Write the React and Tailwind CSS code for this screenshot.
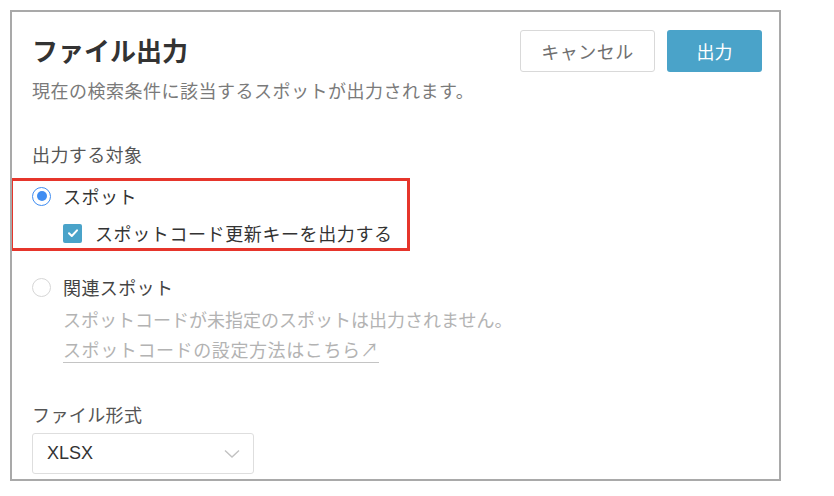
import React from 'react';

const jp = { fontFamily: '"Noto Sans CJK JP", "Noto Sans", sans-serif' };

const Radio = ({ checked }) => (
  <span
    className={
      'flex h-[19px] w-[19px] shrink-0 items-center justify-center rounded-full border ' +
      (checked ? 'border-[#3f8df2] border-[1.5px]' : 'border-[#d6d6d6]')
    }
  >
    {checked && <span className="h-[10px] w-[10px] rounded-full bg-[#3f8df2]" />}
  </span>
);

const Checkbox = () => (
  <span className="flex h-[19px] w-[19px] shrink-0 items-center justify-center rounded-[2px] bg-[#4aa3c9]">
    <svg width="12" height="12" viewBox="0 0 12 12" fill="none">
      <path d="M2 6.2 L4.8 9 L10 3.3" stroke="white" strokeWidth="2" strokeLinecap="round" strokeLinejoin="round" />
    </svg>
  </span>
);

const App = () => {
  return (
    <div className="min-h-[496px] w-[834px] bg-white pl-[10px] pt-[10px]" style={jp}>
      <div className="h-[471px] w-[771px] overflow-hidden border-2 border-[#a9a9a9] bg-white pl-[20px] pr-[17px] pt-[18px]">
        {/* Header */}
        <div className="flex items-start justify-between">
          <div className="mt-[2px]">
            <h1 className="text-[26px] font-bold leading-[36px] text-[#333]">ファイル出力</h1>
            <p className="mt-[8px] text-[18px] leading-[28px] tracking-[0.5px] text-[#7a7a7a]">
              現在の検索条件に該当するスポットが出力されます。
            </p>
          </div>
          <div className="flex gap-[12px]">
            <button className="h-[42px] w-[135px] rounded-[3px] border border-[#d9d9d9] bg-white text-[18px] tracking-[0.5px] text-[#707070]">
              キャンセル
            </button>
            <button className="h-[42px] w-[95px] rounded-[3px] bg-[#4aa3c9] text-[18px] text-white">
              出力
            </button>
          </div>
        </div>

        {/* Target */}
        <div className="mt-[36px] text-[18px] leading-[28px] tracking-[0.4px] text-[#555]">出力する対象</div>

        <div className="-ml-[22px] mt-[10px] w-[400px] border-[3px] border-[#e6352b] pb-[1px] pl-[19px] pt-[1px]">
          <label className="flex h-[28px] items-center gap-[12px]">
            <Radio checked />
            <span className="text-[18px] leading-[28px] tracking-[0.5px] text-[#333]">スポット</span>
          </label>
          <label className="mt-[9px] flex h-[28px] items-center gap-[13px] pl-[31px]">
            <Checkbox />
            <span className="text-[18px] leading-[28px] tracking-[0.6px] text-[#333]">スポットコード更新キーを出力する</span>
          </label>
        </div>

        <label className="mt-[22px] flex h-[28px] items-center gap-[12px]">
          <Radio />
          <span className="text-[18px] leading-[28px] tracking-[0.4px] text-[#444]">関連スポット</span>
        </label>
        <div className="pl-[31px]">
          <p className="mt-[4px] text-[18px] leading-[28px] text-[#b3b3b3]">
            スポットコードが未指定のスポットは出力されません。
          </p>
          <a className="mt-[3px] inline-block border-b border-[#c4c4c4] text-[18px] leading-[26px] tracking-[0.6px] text-[#b3b3b3]">
            スポットコードの設定方法はこちら↗
          </a>
        </div>

        {/* File format */}
        <div className="mt-[37px] text-[18px] leading-[28px] tracking-[0.4px] text-[#555]">ファイル形式</div>
        <div className="mt-[5px] flex h-[41px] w-[222px] items-center justify-between rounded-[3px] border border-[#dedede] pl-[14px] pr-[13px]">
          <span className="text-[18px] text-[#333]" style={{ fontFamily: '"Liberation Sans", Arial, sans-serif' }}>
            XLSX
          </span>
          <svg width="16" height="10" viewBox="0 0 16 10" fill="none">
            <path d="M1 1.5 L8 8 L15 1.5" stroke="#c2c2c2" strokeWidth="1.4" />
          </svg>
        </div>
      </div>
    </div>
  );
};

export default App;
